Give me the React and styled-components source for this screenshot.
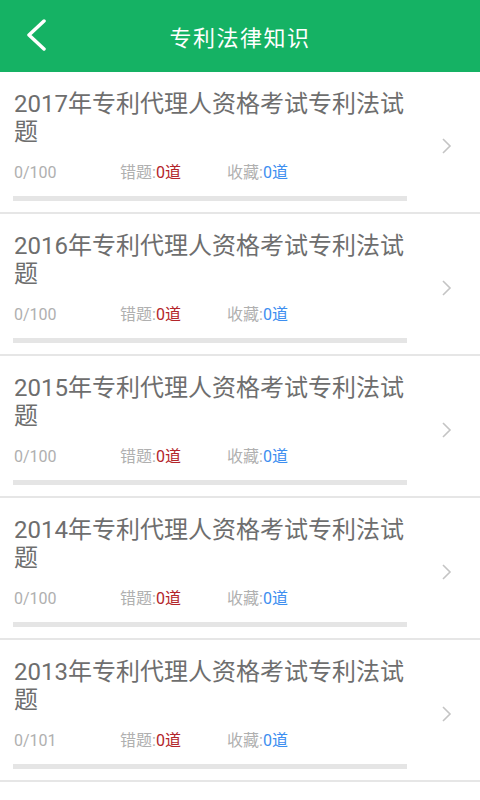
import React from "react";
import styled, { createGlobalStyle } from "styled-components";

const GlobalStyle = createGlobalStyle`
  html, body {
    margin: 0;
    padding: 0;
    background: #ffffff;
    font-family: Roboto, "Noto Sans CJK SC", sans-serif;
  }
`;

const Page = styled.div`
  width: 480px;
  min-height: 800px;
  background: #ffffff;
`;

const Header = styled.div`
  height: 72px;
  background: #15b264;
  display: grid;
  grid-template-columns: 72px 1fr 72px;
  align-items: center;
  color: #ffffff;

  .title {
    text-align: center;
    font-size: 22px;
    letter-spacing: 1.5px;
  }
`;

const BackButton = styled.div`
  display: flex;
  align-items: center;
  padding-left: 24px;
  height: 100%;
`;

const Item = styled.div`
  display: flex;
  align-items: center;
  padding: 18px 0 11px 13px;
  border-bottom: 2px solid #e6e6e6;
`;

const Content = styled.div`
  width: 394px;
`;

const Title = styled.div`
  font-size: 24px;
  line-height: 28px;
  color: #6e6e6e;
  padding-left: 1px;
`;

const Meta = styled.div`
  display: grid;
  grid-template-columns: 106px 107px auto;
  margin-top: 17px;
  padding-left: 1px;
  font-size: 16px;
  line-height: 20px;
  color: #b0b0b0;
`;

const Count = styled.span`
  color: ${(p) => p.color};
`;

const Bar = styled.div`
  margin-top: 13px;
  height: 5px;
  background: #e5e5e5;
`;

const Arrow = styled.div`
  flex: 1;
  display: flex;
  justify-content: center;
  padding-left: 6px;
`;

const items = [
  { year: 2017, total: 100 },
  { year: 2016, total: 100 },
  { year: 2015, total: 100 },
  { year: 2014, total: 100 },
  { year: 2013, total: 101 },
];

const App = () => {
  return (
    <Page>
      <GlobalStyle />
      <Header>
        <BackButton>
          <svg width="24" height="34" viewBox="0 0 24 34">
            <polyline
              points="20,2 5,16 20,30"
              fill="none"
              stroke="#ffffff"
              strokeWidth="3.5"
              strokeLinecap="round"
              strokeLinejoin="round"
            />
          </svg>
        </BackButton>
        <div className="title">专利法律知识</div>
        <div />
      </Header>
      {items.map((item) => (
        <Item key={item.year}>
          <Content>
            <Title>{item.year}年专利代理人资格考试专利法试题</Title>
            <Meta>
              <span>0/{item.total}</span>
              <span>
                错题:<Count color="#b3252a">0道</Count>
              </span>
              <span>
                收藏:<Count color="#3d8ef0">0道</Count>
              </span>
            </Meta>
            <Bar />
          </Content>
          <Arrow>
            <svg width="12" height="18" viewBox="0 0 12 18">
              <polyline
                points="2,2 9,9 2,16"
                fill="none"
                stroke="#c4c4c4"
                strokeWidth="1.6"
              />
            </svg>
          </Arrow>
        </Item>
      ))}
    </Page>
  );
};

export default App;
